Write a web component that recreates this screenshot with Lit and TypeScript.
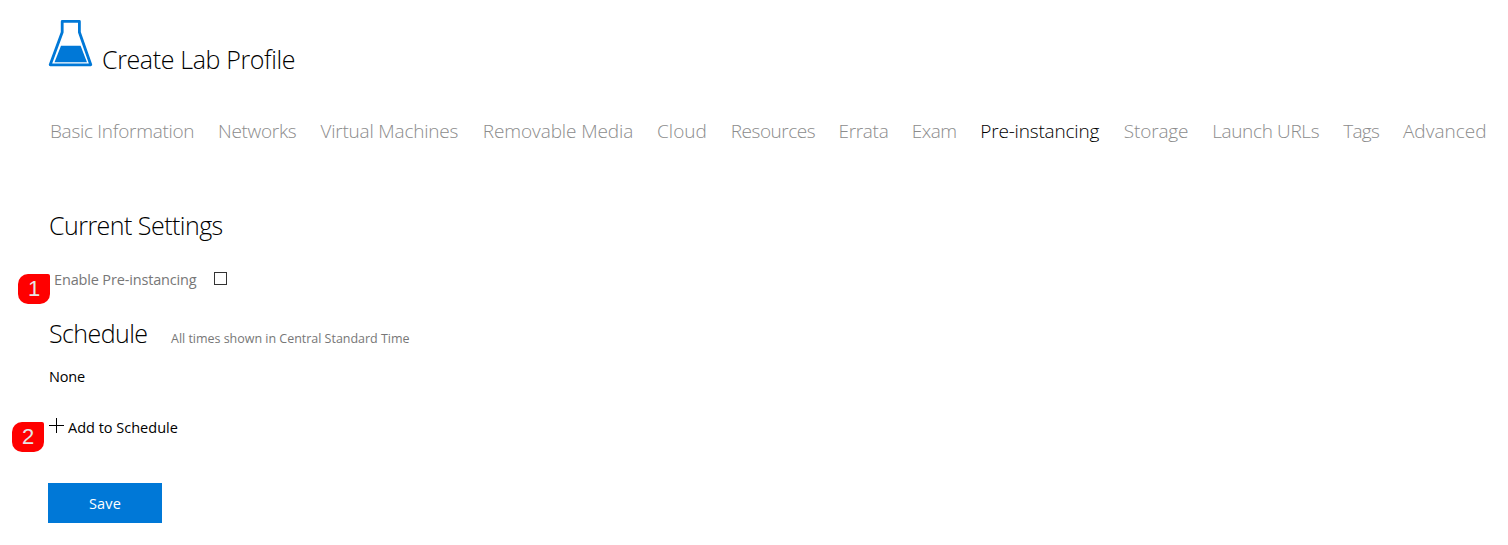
import { LitElement, html, css } from "lit";
import { customElement, state } from "lit/decorators.js";
import { classMap } from "lit/directives/class-map.js";

interface Tab {
  label: string;
  width: number;
  tracking: number;
}

const TABS: Tab[] = [
  { label: "Basic Information", width: 168, tracking: -0.29 },
  { label: "Networks", width: 102.4, tracking: -0.3 },
  { label: "Virtual Machines", width: 162.4, tracking: -0.2 },
  { label: "Removable Media", width: 174.2, tracking: -0.1 },
  { label: "Cloud", width: 73.8, tracking: 0.05 },
  { label: "Resources", width: 107.7, tracking: -0.48 },
  { label: "Errata", width: 73.3, tracking: -0.3 },
  { label: "Exam", width: 68.5, tracking: -0.5 },
  { label: "Pre-instancing", width: 143.5, tracking: -0.18 },
  { label: "Storage", width: 88.4, tracking: -0.15 },
  { label: "Launch URLs", width: 131, tracking: -0.35 },
  { label: "Tags", width: 59.8, tracking: -0.65 },
  { label: "Advanced", width: 86, tracking: 0 },
];

@customElement("app-root")
export class AppRoot extends LitElement {
  static styles = css`
    :host {
      display: block;
      box-sizing: border-box;
      height: 545px;
      padding: 20px 0 0 48px;
      overflow: hidden;
      background: #fff;
      color: #000;
      font-family: "Open Sans", "Noto Sans", sans-serif;
      font-size: 14.5px;
      line-height: 20px;
      white-space: nowrap;
    }
    h1, h2 {
      margin: 0;
      font-size: 25px;
      font-weight: 300;
      line-height: 34px;
    }
    svg { display: block; }
    .header {
      display: flex;
      height: 56px;
      gap: 9px;
    }
    .title { padding-top: 22px; letter-spacing: -0.37px; }
    .tabs { display: flex; margin-top: 42px; padding-left: 2px; }
    .tab {
      flex: none;
      font-size: 19px;
      font-weight: 300;
      line-height: 26px;
      color: #8c8c8c;
      cursor: pointer;
    }
    .tab.active { color: #000; }
    .current { margin-top: 64px; padding-left: 1px; letter-spacing: -0.53px; }
    .row { position: relative; display: flex; height: 20px; }
    .enable { margin-top: 28px; padding-left: 6px; color: #777; }
    .enable label { width: 160px; letter-spacing: -0.16px; }
    .check {
      appearance: none;
      box-sizing: border-box;
      width: 13px;
      height: 13px;
      margin: 2px 0 0;
      border: 1px solid #333;
      border-radius: 0;
      background: #fff;
    }
    .schedule { display: flex; align-items: baseline; margin-top: 26px; padding-left: 1px; }
    .schedule h2 { width: 122px; letter-spacing: -0.57px; }
    .note { font-size: 12.5px; color: #777; letter-spacing: -0.02px; }
    .none { margin-top: 17px; padding-left: 1px; letter-spacing: -0.15px; }
    .add { margin-top: 31px; gap: 4px; }
    .add svg { margin-left: 1px; }
    .badge {
      position: absolute;
      width: 32px;
      height: 30px;
      border-radius: 10px 2px 10px 10px;
      background: #f00;
      color: #e6e6e6;
      font: 22px/30px "Liberation Sans", Arial, sans-serif;
      text-align: center;
    }
    .one { left: -30px; top: 4px; }
    .two { left: -36px; top: 4px; }
    .save {
      display: block;
      width: 114px;
      height: 40px;
      margin-top: 45px;
      padding: 1px 0 0;
      border: 0;
      background: #0078d7;
      color: #fff;
      font: inherit;
      letter-spacing: 0.2px;
    }
  `;

  @state() private active = "Pre-instancing";

  render() {
    return html`
      <header class="header">
        <svg width="45" height="47" viewBox="0 0 45 47" fill="none">
          <path d="M14.2 1.4H31.4V12.2L42.8 44.8H2.2L14.2 12.2Z" stroke="#0078d7" stroke-width="2.8" stroke-linejoin="round" />
          <path d="M13 25.7H32.6L39 42.2H6.5Z" fill="#0078d7" />
        </svg>
        <h1 class="title">Create Lab Profile</h1>
      </header>
      <nav class="tabs">
        ${TABS.map(
          (t) => html`<a
            class=${classMap({ tab: true, active: t.label === this.active })}
            style="width:${t.width}px;letter-spacing:${t.tracking}px"
            @click=${() => (this.active = t.label)}
            >${t.label}</a>`
        )}
      </nav>
      <h2 class="current">Current Settings</h2>
      <div class="row enable">
        <span class="badge one">1</span>
        <label for="enable">Enable Pre-instancing</label>
        <input class="check" id="enable" type="checkbox" />
      </div>
      <div class="schedule">
        <h2>Schedule</h2>
        <span class="note">All times shown in Central Standard Time</span>
      </div>
      <div class="none">None</div>
      <div class="row add">
        <span class="badge two">2</span>
        <svg width="15" height="15" viewBox="0 0 15 15">
          <path d="M7.5 0V15M0 7.5H15" stroke="#000" />
        </svg>
        <span>Add to Schedule</span>
      </div>
      <button class="save">Save</button>
    `;
  }
}
